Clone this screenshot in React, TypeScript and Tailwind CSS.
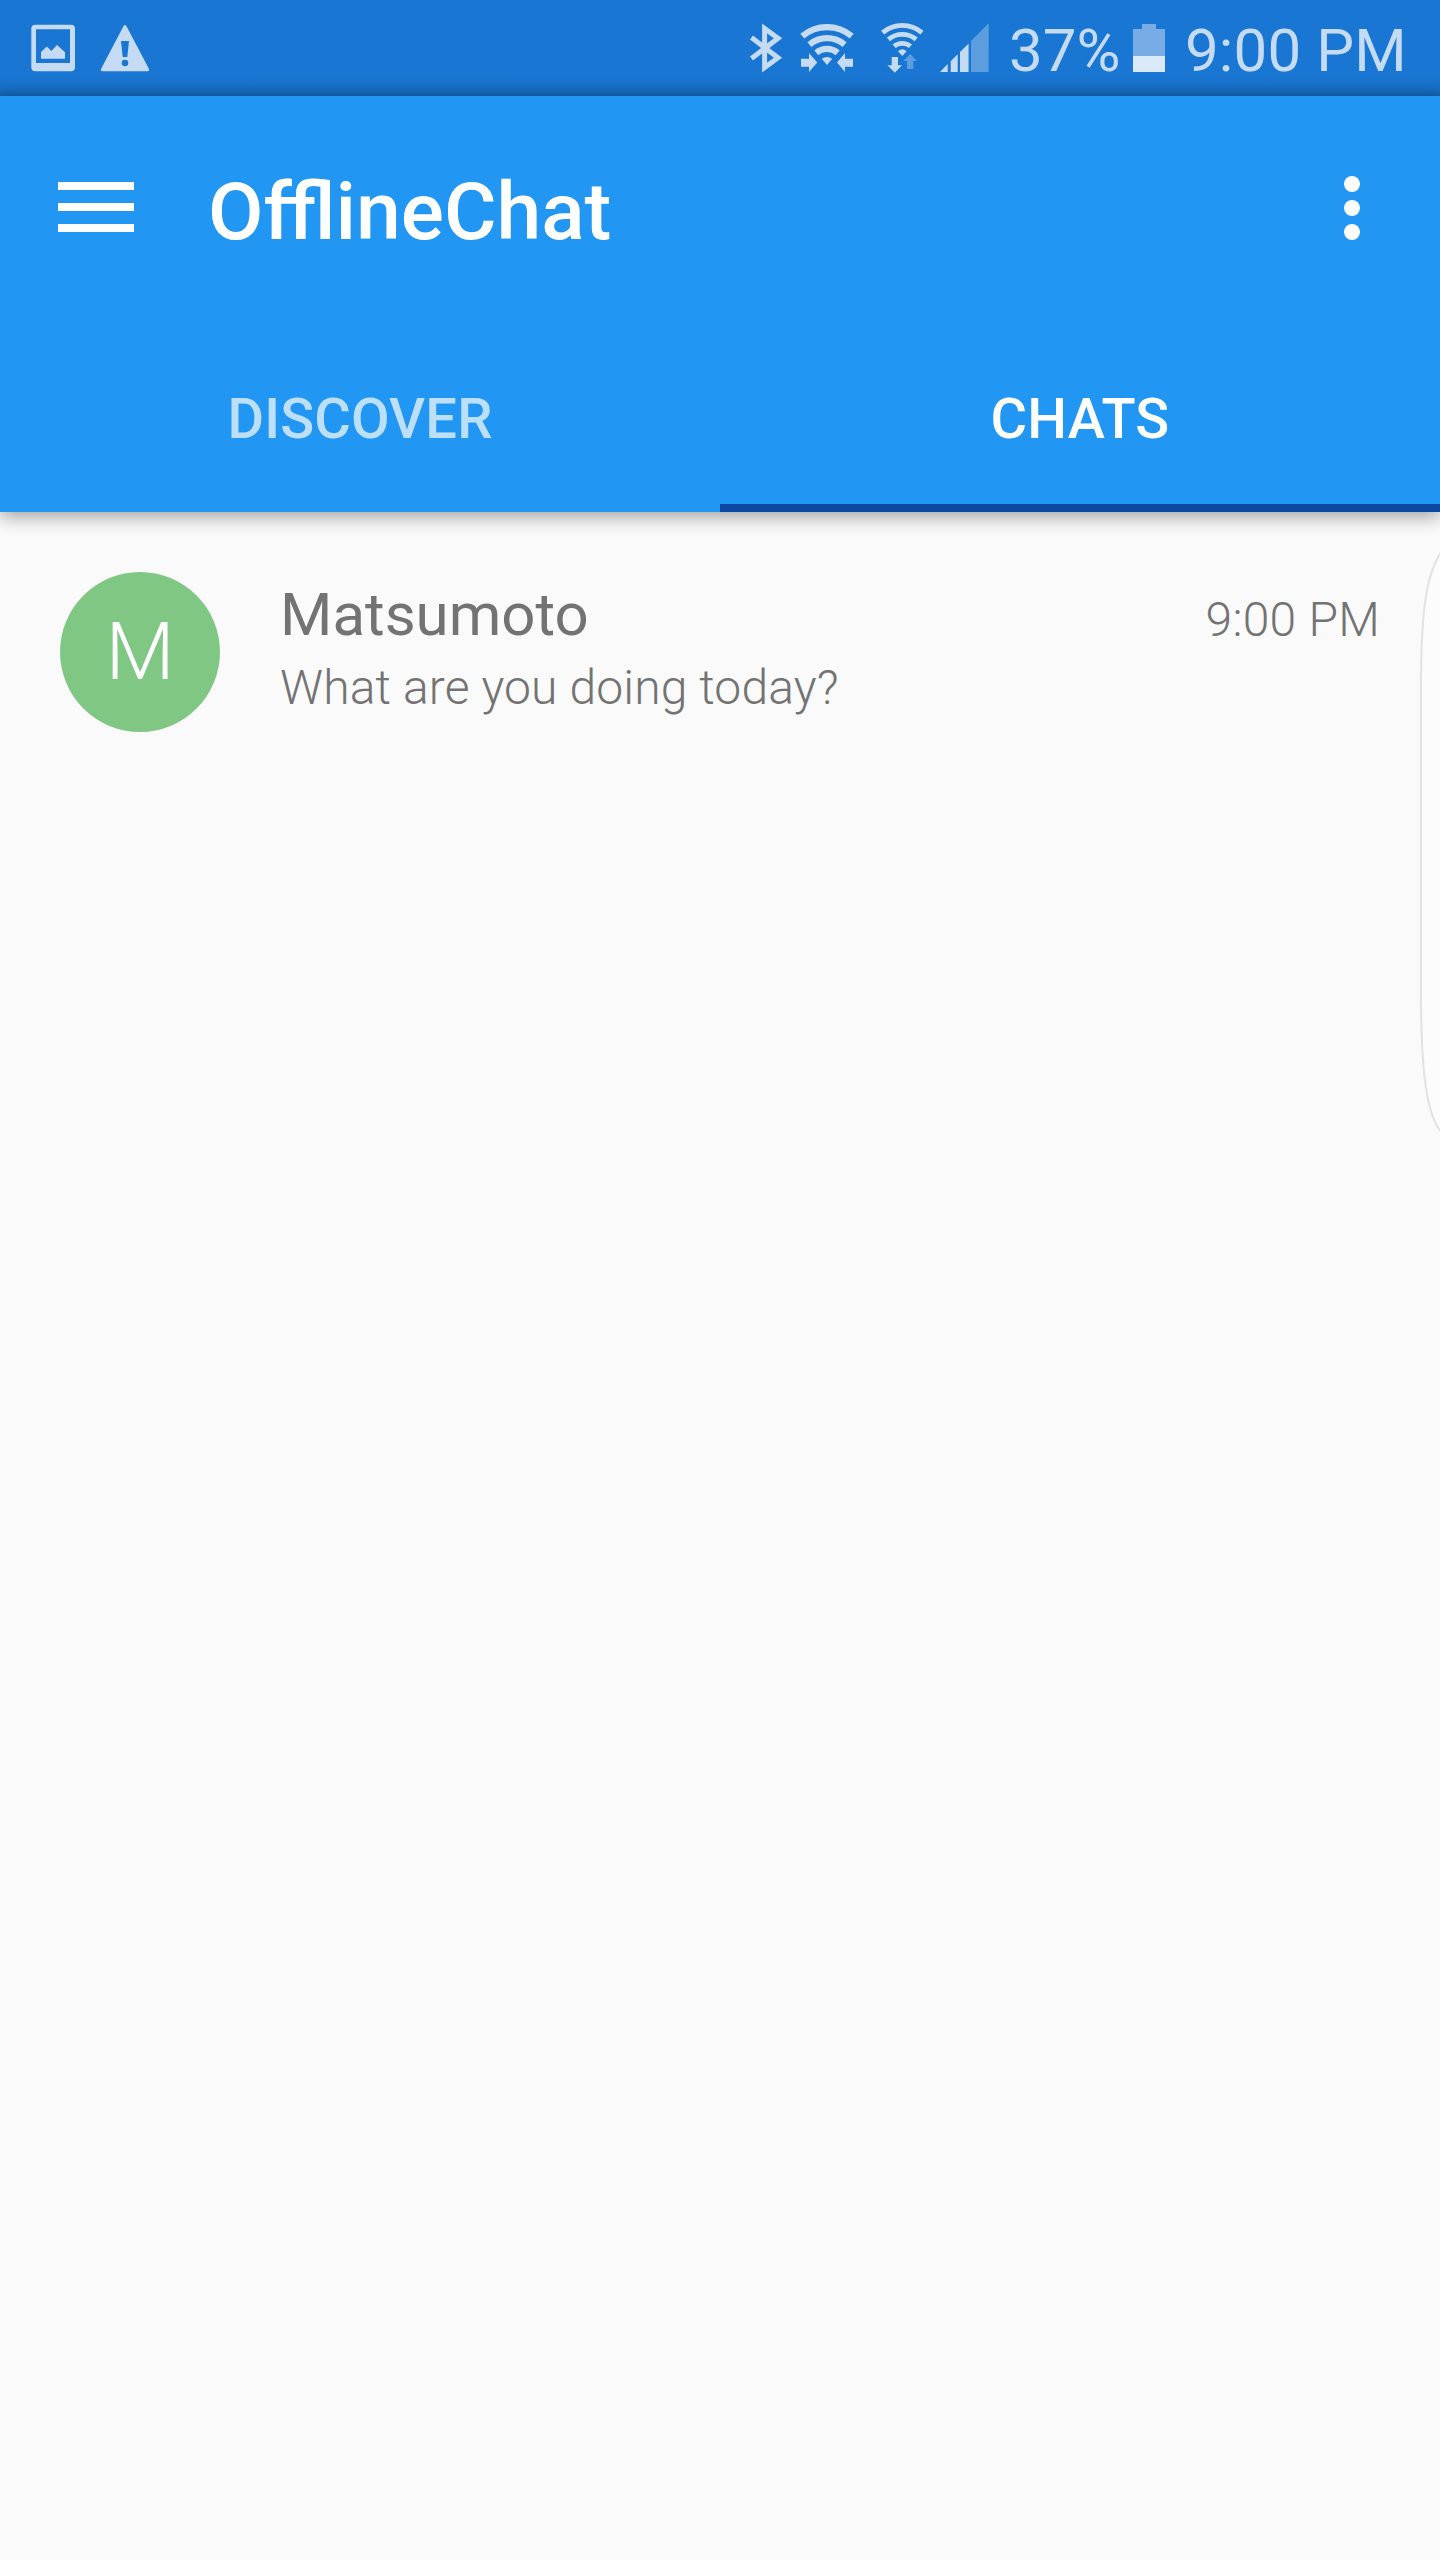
import type { ReactNode } from "react";

type IconProps = {
  box: string;
  className: string;
  children: ReactNode;
};

/* Status-bar glyph: all of them share one coordinate space, each shows its own slice. */
function StatusIcon({ box, className, children }: IconProps) {
  return (
    <svg viewBox={box} className={`h-24 shrink-0 ${className}`} fill="currentColor" aria-hidden="true">
      {children}
    </svg>
  );
}

function arc(cx: number, cy: number, r: number, sin = 0.643, cos = 0.766) {
  return `M${cx - r * sin} ${cy - r * cos}A${r} ${r} 0 0 1 ${cx + r * sin} ${cy - r * cos}`;
}

function StatusBar() {
  return (
    <div className="flex h-24 items-center bg-[#1976d2] bg-[linear-gradient(to_bottom,transparent_76px,rgba(0,0,0,0.03)_82px,rgba(0,0,0,0.09)_89px,rgba(0,0,0,0.2)_96px)] text-[#c5dbf3]">
      <StatusIcon box="30 0 46 96" className="ml-[30px] w-[46px]">
        <path
          fillRule="evenodd"
          d="M35.3 24.7H71a4 4 0 0 1 4 4V67.300a4 4 0 0 1-4 4H35.300a4 4 0 0 1-4-4V28.700a4 4 0 0 1 4-4ZM36 29.300V63H70V29.300Z"
        />
        <path d="M41 58.800V52L46.800 46.600L51.300 51L57 45L65 52.300V58.800Z" />
      </StatusIcon>
      <StatusIcon box="100 0 50 96" className="ml-6 w-[50px]">
        <path
          fillRule="evenodd"
          d="M123.600 26Q125 24 126.400 26L149 69Q149.600 71.200 147.500 71.200H102.500Q100.400 71.200 101 69ZM121 41L122.700 57H127.300L129 41ZM125 59.700A3.300 3.300 0 1 0 125 66.300A3.300 3.300 0 1 0 125 59.700Z"
        />
      </StatusIcon>

      <div className="flex-1" />

      <StatusIcon box="749 0 34 96" className="w-[34px]">
        <path
          d="M751.500 37.500L778 57.800L764.600 67.500V28.500L778 38.300L751.500 58.500"
          fill="none"
          stroke="currentColor"
          strokeWidth="5"
          strokeMiterlimit="10"
        />
      </StatusIcon>
      <StatusIcon box="800 0 54 96" className="ml-[17px] w-[54px]">
        <g fill="none" stroke="currentColor" strokeWidth="6.200">
          <path d={arc(827, 65.5, 38.4)} />
          <path d={arc(827, 65.5, 27.4)} />
          <path d={arc(827, 65.5, 16.6)} />
        </g>
        <path d="M827 65L821.800 58.800Q827 55 832.200 58.800Z" />
        <path d="M801 58.700H809V53L817.300 62.500L809 72V66.700H801Z" />
        <path d="M853 58.700H845V53L837 62.500L845 72V66.700H853Z" />
      </StatusIcon>
      <StatusIcon box="880 0 45 96" className="ml-[26px] w-[45px]">
        <g fill="none" stroke="currentColor" strokeWidth="4.800">
          <path d={arc(902.3, 56, 30.6)} />
          <path d={arc(902.3, 56, 21.6)} />
          <path d={arc(902.3, 56, 12.7)} />
        </g>
        <path d="M902.300 56L898 51.200Q902.300 47.500 906.600 51.200Z" />
        <path d="M891.700 57H898V65.300H902L894.800 72.700L887.500 65.300H891.700Z" />
        <path className="text-[#5c9de0]" d="M907 69H913.300V61H917L910.200 54L903.500 61H907Z" />
      </StatusIcon>
      <StatusIcon box="940 0 49 96" className="ml-[15px] w-[49px]">
        <path d="M940 72L947.700 64V72ZM950.700 72V61.300L957.700 54.300V72ZM960 72V52L968.600 43.400V72Z" />
        <path className="text-[#5c9de0]" d="M971 72V41L988.700 23.300V72Z" />
      </StatusIcon>
      <span className="mt-[5px] ml-5 w-[114px] text-[60px] leading-[70px] whitespace-nowrap">37%</span>
      <StatusIcon box="1133 0 32 96" className="ml-[10px] w-8">
        <path className="text-[#77ace4]" d="M1142 24H1156V29H1165V56H1133V29H1142Z" />
        <path className="text-[#d9e9f8]" d="M1133 56H1165V72H1133Z" />
      </StatusIcon>
      <span className="mt-[5px] mr-8 ml-5 w-[223px] text-[60px] leading-[70px] tracking-[0.15px] whitespace-nowrap">
        9:00 PM
      </span>
    </div>
  );
}

function AppBar() {
  return (
    <header className="relative bg-[#2196f3] text-white shadow-[0_6px_16px_rgba(0,0,0,0.32)]">
      <div className="flex h-56 items-center">
        <button className="ml-[58px] flex w-[76px] flex-col gap-[13px] pb-[3px]" aria-label="Open menu">
          <span className="h-2 bg-white" />
          <span className="h-2 bg-white" />
          <span className="h-2 bg-white" />
        </button>
        <h1 className="mt-[7px] ml-[74px] flex-1 text-[80.5px] leading-[94px] font-medium">OfflineChat</h1>
        <button className="mr-20 flex w-4 flex-col gap-2" aria-label="More options">
          <span className="size-4 rounded-full bg-white" />
          <span className="size-4 rounded-full bg-white" />
          <span className="size-4 rounded-full bg-white" />
        </button>
      </div>
      <nav className="grid h-48 grid-cols-2 text-center text-[56px] leading-[66px] font-medium tracking-[0.15px]">
        <a className="pt-[66px] text-[#bce0fb]">DISCOVER</a>
        <a className="border-b-8 border-[#0d47a1] pt-[66px]">CHATS</a>
      </nav>
    </header>
  );
}

function ChatRow() {
  return (
    <div className="flex pt-[60px] pl-[60px] text-[#737373]">
      <div className="flex size-40 items-center justify-center rounded-full bg-[#81c784] text-[80px] leading-[94px] font-light text-white">
        M
      </div>
      <div className="ml-[60px] flex-1 pt-2">
        <div className="text-[60px] leading-[70px]">Matsumoto</div>
        <div className="text-[48px] leading-[76px] font-light tracking-[0.13px]">What are you doing today?</div>
      </div>
      <div className="mr-[60px] pt-5 text-[48px] leading-[56px] font-light tracking-[0.25px]">9:00 PM</div>
    </div>
  );
}

export default function App() {
  return (
    <div className="relative flex h-[2560px] w-[1440px] flex-col overflow-hidden bg-[#fafafa] font-['Roboto',sans-serif]">
      <StatusBar />
      <AppBar />
      <main className="flex-1">
        <ChatRow />
      </main>
      {/* Edge-panel handle floating over the right side */}
      <svg className="absolute top-[540px] right-0 h-[600px] w-6" viewBox="1416 540 24 600" aria-hidden="true">
        <path
          d="M1442 551C1426 573 1421 611 1421 690V990C1421 1070 1426 1115 1442 1133"
          fill="#fcfcfc"
          stroke="#e2e2e2"
          strokeWidth="2"
        />
      </svg>
    </div>
  );
}
